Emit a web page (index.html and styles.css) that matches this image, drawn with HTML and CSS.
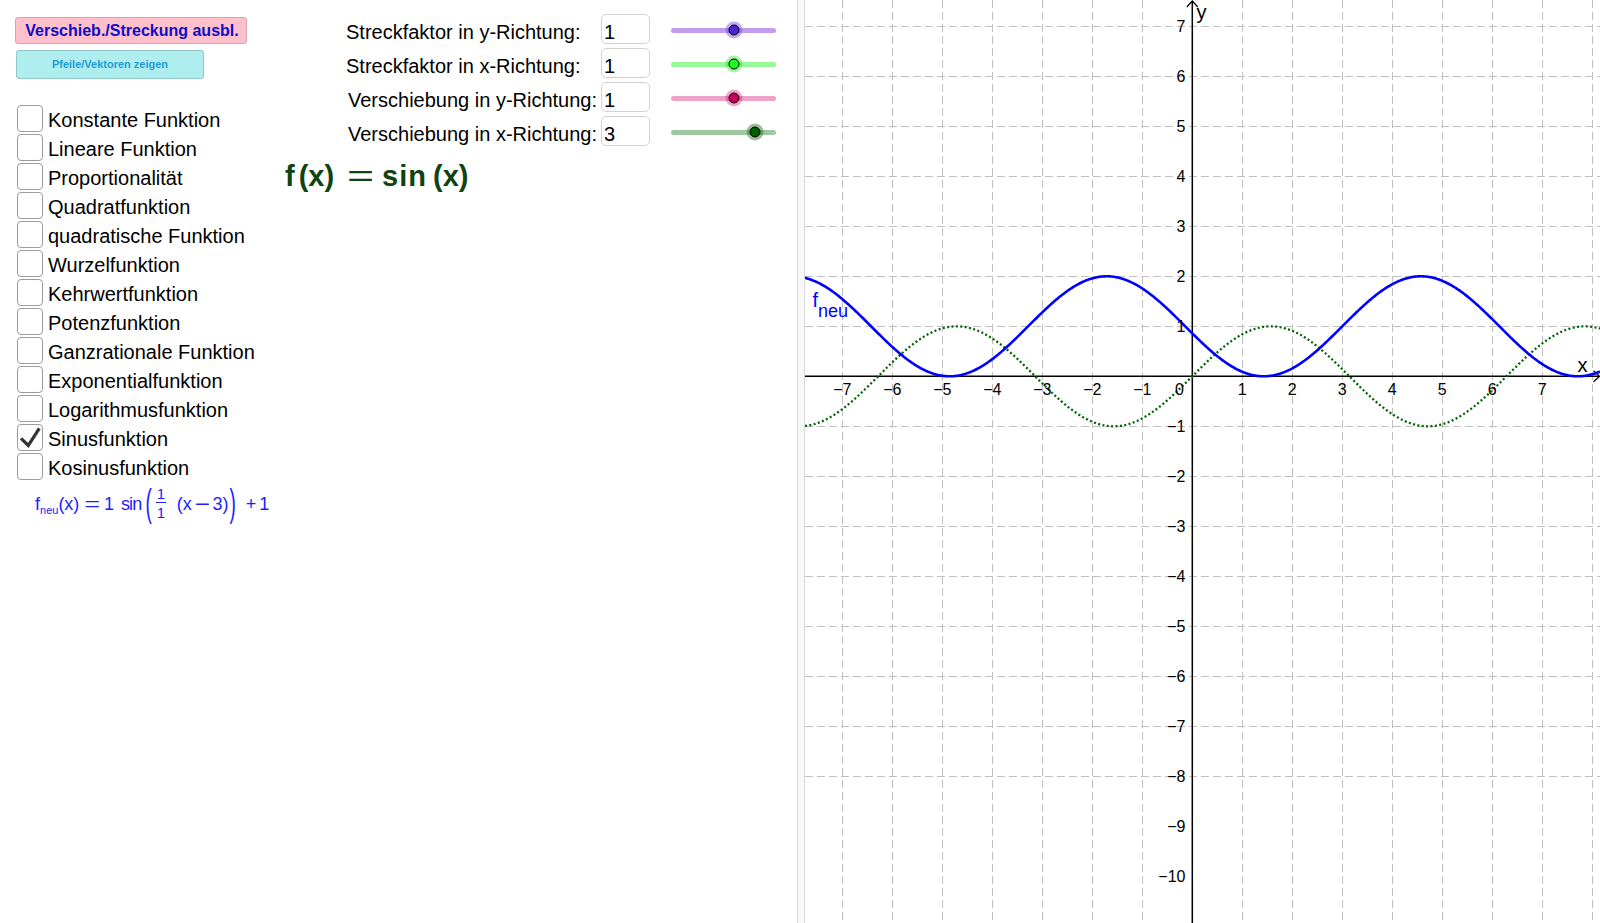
FILE: index.html
```html
<!DOCTYPE html>
<html lang="de">
<head>
<meta charset="utf-8">
<title>Funktionen verschieben und strecken</title>
<link rel="stylesheet" href="styles.css">
</head>
<body>
<div class="app">
  <div class="algebra">
    <div class="col-left">
      <button class="btn btn-hide">Verschieb./Streckung ausbl.</button>
      <button class="btn btn-arrows">Pfeile/Vektoren zeigen</button>
      <ul class="checklist">
        <li class="check-row"><span class="box"></span><span class="check-label">Konstante Funktion</span></li>
        <li class="check-row"><span class="box"></span><span class="check-label">Lineare Funktion</span></li>
        <li class="check-row"><span class="box"></span><span class="check-label">Proportionalität</span></li>
        <li class="check-row"><span class="box"></span><span class="check-label">Quadratfunktion</span></li>
        <li class="check-row"><span class="box"></span><span class="check-label">quadratische Funktion</span></li>
        <li class="check-row"><span class="box"></span><span class="check-label">Wurzelfunktion</span></li>
        <li class="check-row"><span class="box"></span><span class="check-label">Kehrwertfunktion</span></li>
        <li class="check-row"><span class="box"></span><span class="check-label">Potenzfunktion</span></li>
        <li class="check-row"><span class="box"></span><span class="check-label">Ganzrationale Funktion</span></li>
        <li class="check-row"><span class="box"></span><span class="check-label">Exponentialfunktion</span></li>
        <li class="check-row"><span class="box"></span><span class="check-label">Logarithmusfunktion</span></li>
        <li class="check-row"><span class="box checked"><svg class="tick-mark" width="24" height="25" viewBox="0 0 24 25"><polyline points="3,13.3 10.3,20.5 21.3,3.3" /></svg></span><span class="check-label">Sinusfunktion</span></li>
        <li class="check-row"><span class="box"></span><span class="check-label">Kosinusfunktion</span></li>
      </ul>
      <div class="fneu">
        <span class="m-f">f</span><span class="m-sub">neu</span><span class="m-txt">(x)</span><span class="m-eq">=</span><span class="m-one">1</span><span class="m-sin">sin</span><span class="m-bigp m-bigp-l">(</span><span class="m-frac"><span class="m-num">1</span><span class="m-den">1</span></span><span class="m-txt m-inner">(x</span><span class="m-minus">−</span><span class="m-txt m-three">3)</span><span class="m-bigp m-bigp-r">)</span><span class="m-plus">+</span><span class="m-one2">1</span>
      </div>
    </div>
    <div class="col-right">
      <div class="slider-row r-a">
        <span class="slider-label">Streckfaktor in y-Richtung:</span>
        <span class="num-input">1</span>
        <span class="slider s-purple"><span class="track"></span><span class="knob" style="left:60%"></span></span>
      </div>
      <div class="slider-row r-a">
        <span class="slider-label">Streckfaktor in x-Richtung:</span>
        <span class="num-input">1</span>
        <span class="slider s-green"><span class="track"></span><span class="knob" style="left:60%"></span></span>
      </div>
      <div class="slider-row r-b">
        <span class="slider-label">Verschiebung in y-Richtung:</span>
        <span class="num-input">1</span>
        <span class="slider s-pink"><span class="track"></span><span class="knob" style="left:60%"></span></span>
      </div>
      <div class="slider-row r-b">
        <span class="slider-label">Verschiebung in x-Richtung:</span>
        <span class="num-input">3</span>
        <span class="slider s-dark"><span class="track"></span><span class="knob" style="left:80%"></span></span>
      </div>
      <div class="fx">
        <span class="fx-f">f</span><span>(x)</span><span class="fx-eq">=</span><span class="fx-sin">sin</span><span class="fx-arg">(x)</span>
      </div>
    </div>
  </div>
  <div class="divider"></div>
  <div class="graph">
    <svg id="graph-svg" width="795" height="923" viewBox="0 0 795 923">
      <g id="grid" class="grid"></g>
      <g class="axes">
        <line class="axis" x1="0" y1="376.3" x2="794" y2="376.3"/>
        <line class="axis" x1="387.3" y1="1" x2="387.3" y2="923"/>
        <polyline class="arrow" points="788.5,370.8 794.5,376.3 788.5,381.8"/>
        <polyline class="arrow" points="381.8,7 387.3,1 392.8,7"/>
      </g>
      <path id="c-sin" class="curve-sin" d=""/>
      <path id="c-fneu" class="curve-fneu" d=""/>
      <g class="ticks-x">
        <text x="37.3" y="394.5">−7</text>
        <text x="87.3" y="394.5">−6</text>
        <text x="137.3" y="394.5">−5</text>
        <text x="187.3" y="394.5">−4</text>
        <text x="237.3" y="394.5">−3</text>
        <text x="287.3" y="394.5">−2</text>
        <text x="337.3" y="394.5">−1</text>
        <text x="437.3" y="394.5">1</text>
        <text x="487.3" y="394.5">2</text>
        <text x="537.3" y="394.5">3</text>
        <text x="587.3" y="394.5">4</text>
        <text x="637.3" y="394.5">5</text>
        <text x="687.3" y="394.5">6</text>
        <text x="737.3" y="394.5">7</text>
      </g>
      <g class="ticks-y">
        <text x="380.5" y="32.3">7</text>
        <text x="380.5" y="82.3">6</text>
        <text x="380.5" y="132.3">5</text>
        <text x="380.5" y="182.3">4</text>
        <text x="380.5" y="232.3">3</text>
        <text x="380.5" y="282.3">2</text>
        <text x="380.5" y="332.3">1</text>
        <text x="379" y="394.5">0</text>
        <text x="380.5" y="432.3">−1</text>
        <text x="380.5" y="482.3">−2</text>
        <text x="380.5" y="532.3">−3</text>
        <text x="380.5" y="582.3">−4</text>
        <text x="380.5" y="632.3">−5</text>
        <text x="380.5" y="682.3">−6</text>
        <text x="380.5" y="732.3">−7</text>
        <text x="380.5" y="782.3">−8</text>
        <text x="380.5" y="832.3">−9</text>
        <text x="380.5" y="882.3">−10</text>
      </g>
      <text class="axis-name" x="772.5" y="372">x</text>
      <text class="axis-name" x="391.5" y="18.5">y</text>
      <text class="fneu-label" x="7.5" y="307">f<tspan class="fneu-sub" dy="10">neu</tspan></text>
    </svg>
  </div>
</div>
<script src="script.js"></script>
</body>
</html>
```

FILE: styles.css
```css
html, body {
  margin: 0;
  padding: 0;
  background: #ffffff;
  font-family: "Liberation Sans", Arial, sans-serif;
}

.app {
  display: flex;
  width: 1600px;
  height: 923px;
  overflow: hidden;
  background: #ffffff;
}

.algebra {
  width: 797px;
  flex: none;
  display: flex;
}

/* ---------- left column ---------- */
.col-left {
  width: 285px;
  flex: none;
  box-sizing: border-box;
  padding: 17px 0 0 15px;
  display: flex;
  flex-direction: column;
  align-items: flex-start;
}

.btn {
  appearance: none;
  margin: 0;
  padding: 0;
  box-sizing: border-box;
  border-radius: 3px;
  text-align: center;
  font-family: "Liberation Sans", Arial, sans-serif;
  font-weight: bold;
  cursor: pointer;
}

.btn-hide {
  width: 232px;
  height: 27px;
  background: #ffc0cb;
  border: 1px solid #d3a6ae;
  color: #0d0dc6;
  font-size: 16px;
  line-height: 25px;
  padding-left: 2px;
}

.btn-arrows {
  margin-top: 6px;
  margin-left: 1px;
  width: 188px;
  height: 29px;
  background: #afeeee;
  border: 1px solid #90c7c7;
  color: #1f9bd6;
  font-size: 11px;
  line-height: 27px;
}

.checklist {
  list-style: none;
  margin: 25px 0 0 0;
  padding: 0;
}

.check-row {
  display: flex;
  align-items: flex-start;
  height: 29px;
}

.box {
  flex: none;
  width: 26px;
  height: 27px;
  margin: 1px 0 0 2px;
  box-sizing: border-box;
  border: 1px solid #9c9c9c;
  border-radius: 4px;
  background: #ffffff;
}

.tick-mark {
  display: block;
}

.tick-mark polyline {
  fill: none;
  stroke: #333333;
  stroke-width: 3.2;
  stroke-linejoin: miter;
  stroke-linecap: butt;
}

.check-label {
  margin-left: 5px;
  padding-top: 3px;
  font-size: 20px;
  line-height: 27px;
  color: #000000;
  white-space: nowrap;
}

/* formula f_neu */
.fneu {
  margin-top: 3px;
  margin-left: 20px;
  height: 40px;
  display: flex;
  align-items: center;
  color: #1d1dff;
  font-size: 18px;
  line-height: 1;
  white-space: nowrap;
}

.fneu > span {
  display: inline-block;
  flex: none;
}

.m-sub {
  font-size: 11px;
  align-self: center;
  margin-top: 12px;
}

.m-eq {
  margin-left: 8px;
  transform: scaleX(1.5);
}

.m-one {
  margin-left: 6px;
}

.m-sin {
  margin-left: 7px;
  letter-spacing: -0.8px;
}

.m-bigp {
  font-size: 19px;
  transform: scaleY(2);
  margin-top: -4px;
}

.m-bigp-l {
  margin-left: 4px;
}

.m-frac {
  margin-left: 4px;
  display: inline-flex !important;
  flex-direction: column;
  align-items: center;
  font-size: 15px;
  line-height: 1;
  width: 10px;
  margin-top: -3px;
}

.m-num {
  padding-bottom: 1px;
  border-bottom: 1px solid #1d1dff;
  width: 100%;
  text-align: center;
}

.m-den {
  padding-top: 2px;
}

.m-inner {
  margin-left: 11px;
}

.m-minus {
  margin-left: 5px;
  transform: scaleX(1.45);
}

.m-three {
  margin-left: 5px;
}

.m-bigp-r {
  margin-left: 1px;
}

.m-plus {
  margin-left: 10px;
}

.m-one2 {
  margin-left: 3px;
}

/* ---------- right column ---------- */
.col-right {
  flex: none;
  width: 512px;
  box-sizing: border-box;
  padding-top: 14px;
  display: flex;
  flex-direction: column;
}

.slider-row {
  display: flex;
  align-items: stretch;
  height: 30px;
  margin-bottom: 4px;
}

.r-a {
  padding-left: 61px;
}

.r-b {
  padding-left: 63px;
}

.slider-label {
  flex: none;
  box-sizing: border-box;
  padding-top: 6px;
  font-size: 20px;
  line-height: 24px;
  color: #000000;
  white-space: nowrap;
}

.r-a .slider-label {
  width: 255px;
}

.r-b .slider-label {
  width: 253px;
}

.num-input {
  flex: none;
  width: 49px;
  height: 30px;
  box-sizing: border-box;
  border: 1px solid #d3d3d3;
  border-radius: 5px;
  padding: 5px 0 0 2px;
  font-size: 20px;
  line-height: 24px;
  color: #000000;
}

.slider {
  position: relative;
  flex: none;
  width: 105px;
  margin-left: 21px;
  padding-top: 2px;
  display: flex;
  align-items: center;
}

.track {
  display: block;
  width: 100%;
  height: 5px;
  border-radius: 3px;
}

.knob {
  position: absolute;
  top: calc(50% + 1px);
  width: 17px;
  height: 17px;
  border-radius: 50%;
  transform: translate(-50%, -50%);
  display: flex;
  align-items: center;
  justify-content: center;
}

.knob::after {
  content: "";
  display: block;
  width: 11px;
  height: 11px;
  box-sizing: border-box;
  border-radius: 50%;
  border: 1px solid #000000;
  background: var(--knob);
}

.s-purple .track { background: #c39cec; }
.s-purple .knob { background: rgba(120, 70, 220, 0.45); --knob: #4a24d2; }

.s-green .track { background: #96f896; }
.s-green .knob { background: rgba(40, 220, 40, 0.4); --knob: #1cff1c; }

.s-pink .track { background: #eea2c8; }
.s-pink .knob { background: rgba(210, 40, 120, 0.4); --knob: #c4005c; }

.s-dark .track { background: #a0c8a0; }
.s-dark .knob { background: rgba(30, 110, 30, 0.45); --knob: #005c00; }

.fx {
  margin-top: 12px;
  display: flex;
  color: #0f430f;
  font-size: 29px;
  font-weight: bold;
  line-height: 29px;
  white-space: nowrap;
}

.fx > span {
  display: inline-block;
  flex: none;
}

.fx-f {
  margin-right: 4px;
}

.fx-eq {
  margin-left: 18px;
  transform: scaleX(1.6);
  font-weight: normal;
}

.fx-sin {
  margin-left: 13px;
  letter-spacing: 1px;
}

.fx-arg {
  margin-left: 6px;
}

/* ---------- divider ---------- */
.divider {
  flex: none;
  width: 8px;
  box-sizing: border-box;
  background: #f8f8f8;
  border-left: 1px solid #d9d9d9;
  border-right: 1px solid #d9d9d9;
}

/* ---------- graphics view ---------- */
.graph {
  flex: 1;
  background: #ffffff;
}

#graph-svg {
  display: block;
}

.grid line {
  stroke: #c0c0c0;
  stroke-width: 1;
  stroke-dasharray: 8 4;
}

.axis {
  stroke: #000000;
  stroke-width: 1.5;
}

.arrow {
  fill: none;
  stroke: #000000;
  stroke-width: 1.2;
}

.ticks-x text,
.ticks-y text {
  font-family: "Liberation Sans", Arial, sans-serif;
  font-size: 16px;
  fill: #000000;
}

.ticks-x text {
  text-anchor: middle;
}

.ticks-y text {
  text-anchor: end;
}

.axis-name {
  font-family: "Liberation Sans", Arial, sans-serif;
  font-size: 20px;
  fill: #000000;
}

.curve-sin {
  fill: none;
  stroke: #006400;
  stroke-width: 2.3;
  stroke-dasharray: 2 2.4;
}

.curve-fneu {
  fill: none;
  stroke: #0000ff;
  stroke-width: 2.6;
  stroke-linejoin: round;
}

.fneu-label {
  font-family: "Liberation Sans", Arial, sans-serif;
  font-size: 20px;
  fill: #0000ff;
}

.fneu-sub {
  font-size: 18px;
}
```

FILE: script.js
```js
(function () {
  var NS = "http://www.w3.org/2000/svg";
  var W = 795, H = 923, ox = 387.3, oy = 376.3, s = 50;
  var grid = document.getElementById("grid");
  var k, x, y, l;
  for (k = -8; k <= 9; k++) {
    if (k === 0) continue;
    x = ox + k * s;
    if (x < 0 || x > W) continue;
    l = document.createElementNS(NS, "line");
    x = Math.round(x) + 0.5;
    l.setAttribute("x1", x); l.setAttribute("x2", x);
    l.setAttribute("y1", 0); l.setAttribute("y2", H);
    grid.appendChild(l);
  }
  for (k = -11; k <= 8; k++) {
    if (k === 0) continue;
    y = oy + k * s;
    if (y < 0 || y > H) continue;
    l = document.createElementNS(NS, "line");
    y = Math.round(y) + 0.5;
    l.setAttribute("x1", 0); l.setAttribute("x2", W);
    l.setAttribute("y1", y); l.setAttribute("y2", y);
    grid.appendChild(l);
  }
  function path(f) {
    var d = "", px, X, yy;
    for (px = 0; px <= W; px += 1) {
      X = (px - ox) / s;
      yy = oy - s * f(X);
      d += (px === 0 ? "M" : "L") + px + " " + yy.toFixed(2);
    }
    return d;
  }
  document.getElementById("c-sin").setAttribute("d", path(Math.sin));
  document.getElementById("c-fneu").setAttribute("d", path(function (t) { return Math.sin(t - 3) + 1; }));
})();
```
